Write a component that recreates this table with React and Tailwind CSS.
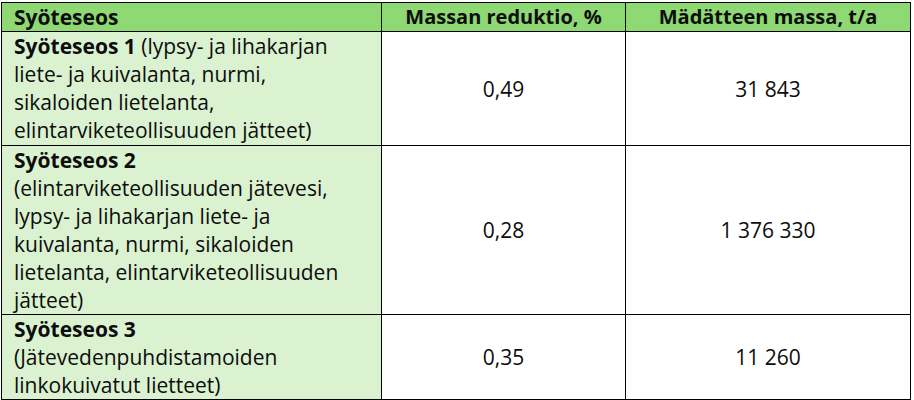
const rows = [
  {
    title: "Syöteseos 1",
    lines: [
      [" (lypsy- ja lihakarjan"],
      ["liete- ja kuivalanta, nurmi,"],
      ["sikaloiden lietelanta,"],
      ["elintarviketeollisuuden jätteet)"],
    ],
    inline: true,
    reduction: "0,49",
    mass: "31 843",
    height: "h-[114px]",
  },
  {
    title: "Syöteseos 2",
    lines: [
      ["(elintarviketeollisuuden jätevesi,"],
      ["lypsy- ja lihakarjan liete- ja"],
      ["kuivalanta, nurmi, sikaloiden"],
      ["lietelanta, elintarviketeollisuuden"],
      ["jätteet)"],
    ],
    reduction: "0,28",
    mass: "1 376 330",
    height: "h-[168px]",
  },
  {
    title: "Syöteseos 3",
    lines: [["(Jätevedenpuhdistamoiden"], ["linkokuivatut lietteet)"]],
    reduction: "0,35",
    mass: "11 260",
    height: "h-[85px]",
  },
];

function FeedCell({ row }) {
  // first line may carry the bold title inline
  if (row.inline) {
    const [first, ...rest] = row.lines;
    return (
      <>
        <div className="whitespace-nowrap">
          <span className="font-bold">{row.title}</span>
          {first[0]}
        </div>
        {rest.map((l, i) => (
          <div key={i} className="whitespace-nowrap">{l[0]}</div>
        ))}
      </>
    );
  }
  return (
    <>
      <div className="whitespace-nowrap font-bold">{row.title}</div>
      {row.lines.map((l, i) => (
        <div key={i} className="whitespace-nowrap">{l[0]}</div>
      ))}
    </>
  );
}

export default function App() {
  return (
    <div className="w-[914px] h-[400px] bg-white pt-[2px] pl-[1px] overflow-hidden font-['Open_Sans',Arial,sans-serif] text-[21px] leading-[28px] text-[#0d0d0d]">
      <table className="border-collapse table-fixed w-[909px]">
        <colgroup>
          <col className="w-[380px]" />
          <col className="w-[244px]" />
          <col className="w-[285px]" />
        </colgroup>
        <thead>
          <tr className="h-[29px] bg-[#8ed973]">
            <th className="border border-black px-3 py-0 text-left font-bold">Syöteseos</th>
            <th className="border border-black px-2 py-0 text-center font-bold text-[20px]">Massan reduktio, %</th>
            <th className="border border-black px-2 py-0 text-center font-bold text-[20px]">Mädätteen massa, t/a</th>
          </tr>
        </thead>
        <tbody>
          {rows.map((row) => (
            <tr key={row.title} className={row.height}>
              <td className="border border-black bg-[#daf2d0] px-3 py-0 align-top">
                <FeedCell row={row} />
              </td>
              <td className="border border-black px-2 text-center align-middle">{row.reduction}</td>
              <td className="border border-black px-2 text-center align-middle">{row.mass}</td>
            </tr>
          ))}
        </tbody>
      </table>
    </div>
  );
}
